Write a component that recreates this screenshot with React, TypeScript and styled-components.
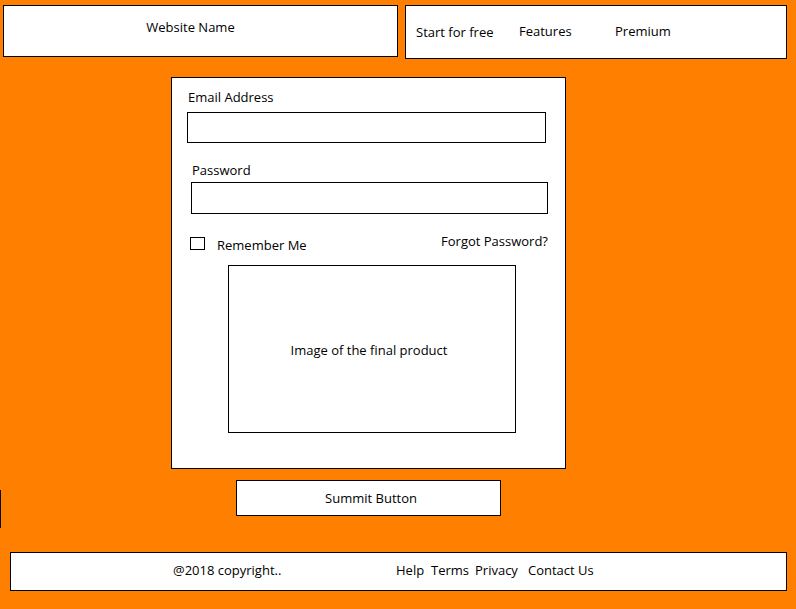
import React from "react";
import styled, { createGlobalStyle } from "styled-components";

const Global = createGlobalStyle`
  html, body { margin: 0; padding: 0; background: #ff8000; }
  body { font-family: "Open Sans", "Noto Sans", sans-serif; font-size: 13px; color: #000; }
  * { box-sizing: border-box; }
`;

const Page = styled.div`
  width: 796px;
  height: 609px;
  background: #ff8000;
  display: flex;
  flex-direction: column;
  overflow: hidden;
`;

const Header = styled.header`
  display: flex;
  align-items: flex-start;
  gap: 7px;
  padding: 5px 0 0 3px;
`;

const Brand = styled.div`
  width: 395px;
  height: 52px;
  border: 1px solid #000;
  background: #fff;
  display: flex;
  justify-content: center;
  padding: 12px 20px 0 0;
  line-height: 18px;
`;

const Nav = styled.nav`
  width: 382px;
  height: 54px;
  border: 1px solid #000;
  background: #fff;
  display: flex;
  align-items: center;
  padding: 0 0 3px 10px;
`;

const NavLink = styled.span<{ $w: number; $dy?: number }>`
  width: ${(p) => p.$w}px;
  line-height: 18px;
  position: relative;
  top: ${(p) => p.$dy ?? 0}px;
`;

const Card = styled.form`
  margin: 18px 0 0 171px;
  width: 395px;
  height: 392px;
  border: 1px solid #000;
  background: #fff;
  display: flex;
  flex-direction: column;
`;

const Label = styled.label<{ $x: number; $t: number }>`
  margin: ${(p) => p.$t}px 0 0 ${(p) => p.$x}px;
  line-height: 18px;
`;

const Input = styled.div<{ $x: number; $t: number; $w: number; $h: number }>`
  margin: ${(p) => p.$t}px 0 0 ${(p) => p.$x}px;
  width: ${(p) => p.$w}px;
  height: ${(p) => p.$h}px;
  border: 1px solid #000;
  background: #fff;
`;

const Options = styled.div`
  margin: 18px 0 0 18px;
  width: 358px;
  height: 22px;
  display: flex;
  align-items: flex-start;
  justify-content: space-between;
`;

const Remember = styled.div`
  display: flex;
  align-items: flex-start;
`;

const Box = styled.span`
  margin-top: 5px;
  width: 15px;
  height: 13px;
  border: 1px solid #000;
`;

const RememberText = styled.span`
  margin: 4px 0 0 12px;
  line-height: 18px;
`;

const Forgot = styled.span`
  line-height: 18px;
`;

const Product = styled.div`
  margin: 11px 0 0 56px;
  width: 288px;
  height: 168px;
  border: 1px solid #000;
  display: flex;
  align-items: center;
  justify-content: center;
  padding: 2px 6px 0 0;
  line-height: 18px;
`;

const ButtonRow = styled.div`
  display: flex;
  align-items: flex-start;
  margin-top: 11px;
  height: 48px;
`;

const Stub = styled.span`
  margin-top: 10px;
  width: 1px;
  height: 38px;
  background: #000;
`;

const Submit = styled.button`
  margin-left: 235px;
  width: 265px;
  height: 36px;
  border: 1px solid #000;
  background: #fff;
  font: inherit;
  color: #000;
  padding: 0 0 0 5px;
  line-height: 18px;
`;

const Footer = styled.footer`
  margin: 24px 0 0 10px;
  width: 777px;
  height: 39px;
  border: 1px solid #000;
  background: #fff;
  display: flex;
  align-items: center;
  padding: 0 0 4px 162px;
  line-height: 18px;
`;

const Copy = styled.span`
  width: 223px;
`;

const FootLink = styled.span<{ $w: number }>`
  width: ${(p) => p.$w}px;
`;

export default function App() {
  return (
    <Page>
      <Global />
      <Header>
        <Brand>Website Name</Brand>
        <Nav>
          <NavLink $w={103} $dy={1}>Start for free</NavLink>
          <NavLink $w={96}>Features</NavLink>
          <NavLink $w={80}>Premium</NavLink>
        </Nav>
      </Header>
      <Card onSubmit={(e) => e.preventDefault()}>
        <Label $x={16} $t={10}>Email Address</Label>
        <Input $x={15} $t={6} $w={359} $h={31} />
        <Label $x={20} $t={18}>Password</Label>
        <Input $x={19} $t={3} $w={357} $h={32} />
        <Options>
          <Remember>
            <Box />
            <RememberText>Remember Me</RememberText>
          </Remember>
          <Forgot>Forgot Password?</Forgot>
        </Options>
        <Product>Image of the final product</Product>
      </Card>
      <ButtonRow>
        <Stub />
        <Submit type="button">Summit Button</Submit>
      </ButtonRow>
      <Footer>
        <Copy>@2018 copyright..</Copy>
        <FootLink $w={35}>Help</FootLink>
        <FootLink $w={44}>Terms</FootLink>
        <FootLink $w={53}>Privacy</FootLink>
        <FootLink $w={70}>Contact Us</FootLink>
      </Footer>
    </Page>
  );
}
